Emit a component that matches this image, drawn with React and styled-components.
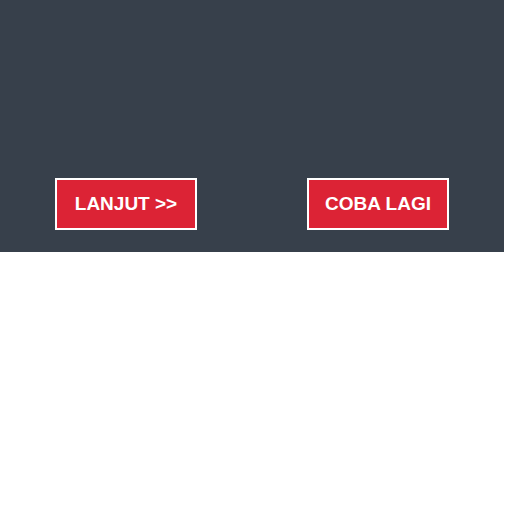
import React from 'react';
import styled, { createGlobalStyle } from 'styled-components';

const Global = createGlobalStyle`
  body {
    margin: 0;
    background: #fff;
    font-family: "Liberation Sans", Arial, sans-serif;
  }
`;

const Panel = styled.div`
  width: 504px;
  height: 252px;
  background-color: #37404b;
  box-sizing: border-box;
  padding-top: 178px;
  display: grid;
  grid-template-columns: 1fr 1fr;
  align-items: start;
`;

const Cell = styled.div`
  display: flex;
  justify-content: center;
`;

const Button = styled.button`
  width: 142px;
  height: 52px;
  box-sizing: border-box;
  border: 2px solid #fff;
  background-color: #dc2335;
  color: #fff;
  font-family: "Liberation Sans", Arial, sans-serif;
  font-weight: 700;
  font-size: 19px;
  text-transform: uppercase;
  padding: 0;
  cursor: pointer;
`;

function App() {
  return (
    <>
      <Global />
      <Panel>
        <Cell>
          <Button>Lanjut &gt;&gt;</Button>
        </Cell>
        <Cell>
          <Button>Coba Lagi</Button>
        </Cell>
      </Panel>
    </>
  );
}

export default App;
